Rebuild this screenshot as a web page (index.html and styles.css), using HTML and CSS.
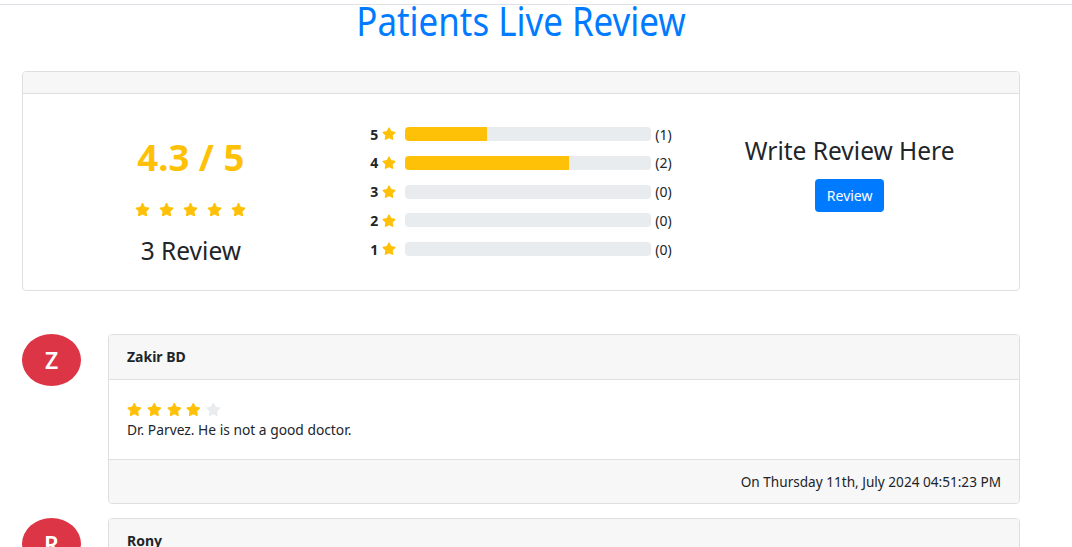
FILE: index.html
```html
<!DOCTYPE html>
<html lang="en">
<head>
<meta charset="utf-8">
<title>Patients Live Review</title>
<link rel="stylesheet" href="styles.css">
</head>
<body>
<div class="topbar"></div>
<main class="wrap">
  <h1 class="title">Patients Live Review</h1>

  <section class="card summary">
    <div class="card-header empty"></div>
    <div class="summary-body">
      <div class="col col-score">
        <div class="score">4.3 / 5</div>
        <div class="stars big">
          <svg class="star" viewBox="0 0 576 512"><path d="M259.3 17.8L194 150.2 47.9 171.5c-26.2 3.8-36.7 36.1-17.7 54.6l105.7 103-25 145.5c-4.5 26.3 23.2 46 46.4 33.7L288 439.6l130.7 68.7c23.2 12.2 50.9-7.4 46.4-33.7l-25-145.5 105.7-103c19-18.5 8.5-50.8-17.7-54.6L382 150.2 316.7 17.8c-11.7-23.6-45.6-23.9-57.4 0z"/></svg>
          <svg class="star" viewBox="0 0 576 512"><path d="M259.3 17.8L194 150.2 47.9 171.5c-26.2 3.8-36.7 36.1-17.7 54.6l105.7 103-25 145.5c-4.5 26.3 23.2 46 46.4 33.7L288 439.6l130.7 68.7c23.2 12.2 50.9-7.4 46.4-33.7l-25-145.5 105.7-103c19-18.5 8.5-50.8-17.7-54.6L382 150.2 316.7 17.8c-11.7-23.6-45.6-23.9-57.4 0z"/></svg>
          <svg class="star" viewBox="0 0 576 512"><path d="M259.3 17.8L194 150.2 47.9 171.5c-26.2 3.8-36.7 36.1-17.7 54.6l105.7 103-25 145.5c-4.5 26.3 23.2 46 46.4 33.7L288 439.6l130.7 68.7c23.2 12.2 50.9-7.4 46.4-33.7l-25-145.5 105.7-103c19-18.5 8.5-50.8-17.7-54.6L382 150.2 316.7 17.8c-11.7-23.6-45.6-23.9-57.4 0z"/></svg>
          <svg class="star" viewBox="0 0 576 512"><path d="M259.3 17.8L194 150.2 47.9 171.5c-26.2 3.8-36.7 36.1-17.7 54.6l105.7 103-25 145.5c-4.5 26.3 23.2 46 46.4 33.7L288 439.6l130.7 68.7c23.2 12.2 50.9-7.4 46.4-33.7l-25-145.5 105.7-103c19-18.5 8.5-50.8-17.7-54.6L382 150.2 316.7 17.8c-11.7-23.6-45.6-23.9-57.4 0z"/></svg>
          <svg class="star" viewBox="0 0 576 512"><path d="M259.3 17.8L194 150.2 47.9 171.5c-26.2 3.8-36.7 36.1-17.7 54.6l105.7 103-25 145.5c-4.5 26.3 23.2 46 46.4 33.7L288 439.6l130.7 68.7c23.2 12.2 50.9-7.4 46.4-33.7l-25-145.5 105.7-103c19-18.5 8.5-50.8-17.7-54.6L382 150.2 316.7 17.8c-11.7-23.6-45.6-23.9-57.4 0z"/></svg>
        </div>
        <div class="count">3 Review</div>
      </div>

      <div class="col col-bars">
        <div class="bar-row">
          <span class="lvl">5</span>
          <svg class="star bar-star" viewBox="0 0 576 512"><path d="M259.3 17.8L194 150.2 47.9 171.5c-26.2 3.8-36.7 36.1-17.7 54.6l105.7 103-25 145.5c-4.5 26.3 23.2 46 46.4 33.7L288 439.6l130.7 68.7c23.2 12.2 50.9-7.4 46.4-33.7l-25-145.5 105.7-103c19-18.5 8.5-50.8-17.7-54.6L382 150.2 316.7 17.8c-11.7-23.6-45.6-23.9-57.4 0z"/></svg>
          <div class="bar"><div class="fill" style="width:33.33%"></div></div>
          <span class="num">(1)</span>
        </div>
        <div class="bar-row">
          <span class="lvl">4</span>
          <svg class="star bar-star" viewBox="0 0 576 512"><path d="M259.3 17.8L194 150.2 47.9 171.5c-26.2 3.8-36.7 36.1-17.7 54.6l105.7 103-25 145.5c-4.5 26.3 23.2 46 46.4 33.7L288 439.6l130.7 68.7c23.2 12.2 50.9-7.4 46.4-33.7l-25-145.5 105.7-103c19-18.5 8.5-50.8-17.7-54.6L382 150.2 316.7 17.8c-11.7-23.6-45.6-23.9-57.4 0z"/></svg>
          <div class="bar"><div class="fill" style="width:66.67%"></div></div>
          <span class="num">(2)</span>
        </div>
        <div class="bar-row">
          <span class="lvl">3</span>
          <svg class="star bar-star" viewBox="0 0 576 512"><path d="M259.3 17.8L194 150.2 47.9 171.5c-26.2 3.8-36.7 36.1-17.7 54.6l105.7 103-25 145.5c-4.5 26.3 23.2 46 46.4 33.7L288 439.6l130.7 68.7c23.2 12.2 50.9-7.4 46.4-33.7l-25-145.5 105.7-103c19-18.5 8.5-50.8-17.7-54.6L382 150.2 316.7 17.8c-11.7-23.6-45.6-23.9-57.4 0z"/></svg>
          <div class="bar"><div class="fill" style="width:0%"></div></div>
          <span class="num">(0)</span>
        </div>
        <div class="bar-row">
          <span class="lvl">2</span>
          <svg class="star bar-star" viewBox="0 0 576 512"><path d="M259.3 17.8L194 150.2 47.9 171.5c-26.2 3.8-36.7 36.1-17.7 54.6l105.7 103-25 145.5c-4.5 26.3 23.2 46 46.4 33.7L288 439.6l130.7 68.7c23.2 12.2 50.9-7.4 46.4-33.7l-25-145.5 105.7-103c19-18.5 8.5-50.8-17.7-54.6L382 150.2 316.7 17.8c-11.7-23.6-45.6-23.9-57.4 0z"/></svg>
          <div class="bar"><div class="fill" style="width:0%"></div></div>
          <span class="num">(0)</span>
        </div>
        <div class="bar-row">
          <span class="lvl">1</span>
          <svg class="star bar-star" viewBox="0 0 576 512"><path d="M259.3 17.8L194 150.2 47.9 171.5c-26.2 3.8-36.7 36.1-17.7 54.6l105.7 103-25 145.5c-4.5 26.3 23.2 46 46.4 33.7L288 439.6l130.7 68.7c23.2 12.2 50.9-7.4 46.4-33.7l-25-145.5 105.7-103c19-18.5 8.5-50.8-17.7-54.6L382 150.2 316.7 17.8c-11.7-23.6-45.6-23.9-57.4 0z"/></svg>
          <div class="bar"><div class="fill" style="width:0%"></div></div>
          <span class="num">(0)</span>
        </div>
      </div>

      <div class="col col-write">
        <div class="write-title">Write Review Here</div>
        <button class="btn" type="button">Review</button>
      </div>
    </div>
  </section>

  <section class="reviews">
    <article class="review">
      <div class="avatar">Z</div>
      <div class="card review-card">
        <div class="card-header name">Zakir BD</div>
        <div class="review-body">
          <div class="stars small">
            <svg class="star" viewBox="0 0 576 512"><path d="M259.3 17.8L194 150.2 47.9 171.5c-26.2 3.8-36.7 36.1-17.7 54.6l105.7 103-25 145.5c-4.5 26.3 23.2 46 46.4 33.7L288 439.6l130.7 68.7c23.2 12.2 50.9-7.4 46.4-33.7l-25-145.5 105.7-103c19-18.5 8.5-50.8-17.7-54.6L382 150.2 316.7 17.8c-11.7-23.6-45.6-23.9-57.4 0z"/></svg>
            <svg class="star" viewBox="0 0 576 512"><path d="M259.3 17.8L194 150.2 47.9 171.5c-26.2 3.8-36.7 36.1-17.7 54.6l105.7 103-25 145.5c-4.5 26.3 23.2 46 46.4 33.7L288 439.6l130.7 68.7c23.2 12.2 50.9-7.4 46.4-33.7l-25-145.5 105.7-103c19-18.5 8.5-50.8-17.7-54.6L382 150.2 316.7 17.8c-11.7-23.6-45.6-23.9-57.4 0z"/></svg>
            <svg class="star" viewBox="0 0 576 512"><path d="M259.3 17.8L194 150.2 47.9 171.5c-26.2 3.8-36.7 36.1-17.7 54.6l105.7 103-25 145.5c-4.5 26.3 23.2 46 46.4 33.7L288 439.6l130.7 68.7c23.2 12.2 50.9-7.4 46.4-33.7l-25-145.5 105.7-103c19-18.5 8.5-50.8-17.7-54.6L382 150.2 316.7 17.8c-11.7-23.6-45.6-23.9-57.4 0z"/></svg>
            <svg class="star" viewBox="0 0 576 512"><path d="M259.3 17.8L194 150.2 47.9 171.5c-26.2 3.8-36.7 36.1-17.7 54.6l105.7 103-25 145.5c-4.5 26.3 23.2 46 46.4 33.7L288 439.6l130.7 68.7c23.2 12.2 50.9-7.4 46.4-33.7l-25-145.5 105.7-103c19-18.5 8.5-50.8-17.7-54.6L382 150.2 316.7 17.8c-11.7-23.6-45.6-23.9-57.4 0z"/></svg>
            <svg class="star off" viewBox="0 0 576 512"><path d="M259.3 17.8L194 150.2 47.9 171.5c-26.2 3.8-36.7 36.1-17.7 54.6l105.7 103-25 145.5c-4.5 26.3 23.2 46 46.4 33.7L288 439.6l130.7 68.7c23.2 12.2 50.9-7.4 46.4-33.7l-25-145.5 105.7-103c19-18.5 8.5-50.8-17.7-54.6L382 150.2 316.7 17.8c-11.7-23.6-45.6-23.9-57.4 0z"/></svg>
          </div>
          <p class="text">Dr. Parvez. He is not a good doctor.</p>
        </div>
        <div class="card-footer">On Thursday 11th, July 2024 04:51:23 PM</div>
      </div>
    </article>

    <article class="review">
      <div class="avatar">R</div>
      <div class="card review-card">
        <div class="card-header name">Rony</div>
        <div class="review-body">
          <div class="stars small">
            <svg class="star" viewBox="0 0 576 512"><path d="M259.3 17.8L194 150.2 47.9 171.5c-26.2 3.8-36.7 36.1-17.7 54.6l105.7 103-25 145.5c-4.5 26.3 23.2 46 46.4 33.7L288 439.6l130.7 68.7c23.2 12.2 50.9-7.4 46.4-33.7l-25-145.5 105.7-103c19-18.5 8.5-50.8-17.7-54.6L382 150.2 316.7 17.8c-11.7-23.6-45.6-23.9-57.4 0z"/></svg>
            <svg class="star" viewBox="0 0 576 512"><path d="M259.3 17.8L194 150.2 47.9 171.5c-26.2 3.8-36.7 36.1-17.7 54.6l105.7 103-25 145.5c-4.5 26.3 23.2 46 46.4 33.7L288 439.6l130.7 68.7c23.2 12.2 50.9-7.4 46.4-33.7l-25-145.5 105.7-103c19-18.5 8.5-50.8-17.7-54.6L382 150.2 316.7 17.8c-11.7-23.6-45.6-23.9-57.4 0z"/></svg>
            <svg class="star" viewBox="0 0 576 512"><path d="M259.3 17.8L194 150.2 47.9 171.5c-26.2 3.8-36.7 36.1-17.7 54.6l105.7 103-25 145.5c-4.5 26.3 23.2 46 46.4 33.7L288 439.6l130.7 68.7c23.2 12.2 50.9-7.4 46.4-33.7l-25-145.5 105.7-103c19-18.5 8.5-50.8-17.7-54.6L382 150.2 316.7 17.8c-11.7-23.6-45.6-23.9-57.4 0z"/></svg>
            <svg class="star" viewBox="0 0 576 512"><path d="M259.3 17.8L194 150.2 47.9 171.5c-26.2 3.8-36.7 36.1-17.7 54.6l105.7 103-25 145.5c-4.5 26.3 23.2 46 46.4 33.7L288 439.6l130.7 68.7c23.2 12.2 50.9-7.4 46.4-33.7l-25-145.5 105.7-103c19-18.5 8.5-50.8-17.7-54.6L382 150.2 316.7 17.8c-11.7-23.6-45.6-23.9-57.4 0z"/></svg>
            <svg class="star" viewBox="0 0 576 512"><path d="M259.3 17.8L194 150.2 47.9 171.5c-26.2 3.8-36.7 36.1-17.7 54.6l105.7 103-25 145.5c-4.5 26.3 23.2 46 46.4 33.7L288 439.6l130.7 68.7c23.2 12.2 50.9-7.4 46.4-33.7l-25-145.5 105.7-103c19-18.5 8.5-50.8-17.7-54.6L382 150.2 316.7 17.8c-11.7-23.6-45.6-23.9-57.4 0z"/></svg>
          </div>
          <p class="text">Good doctor.</p>
        </div>
        <div class="card-footer">On Thursday 11th, July 2024 04:40:10 PM</div>
      </div>
    </article>
  </section>
</main>
</body>
</html>
```

FILE: styles.css
```css
html {
  overflow: hidden;
}

body {
  margin: 0;
  font-family: "Noto Sans", "Open Sans", sans-serif;
  color: #212529;
  background: #fff;
}

.topbar {
  height: 4px;
  border-bottom: 1px solid #dee2e6;
}

.wrap {
  width: 998px;
  margin-left: 22px;
}

.title {
  margin: -8.5px 0 26.5px;
  font-size: 40px;
  line-height: 48px;
  font-weight: 400;
  color: #007bff;
  text-align: center;
  transform: scaleX(0.872);
}

.card {
  border: 1px solid #dfdfdf;
  border-radius: 4px;
  background: #fff;
  overflow: hidden;
}

.card-header {
  background: #f7f7f7;
  border-bottom: 1px solid #dfdfdf;
}

.card-header.empty {
  height: 21px;
}

.summary-body {
  height: 196px;
  padding: 0 5px;
  display: grid;
  grid-template-columns: repeat(3, 1fr);
}

.col {
  display: flex;
  flex-direction: column;
  align-items: center;
}

.col-score {
  padding-top: 38.5px;
  padding-right: 3px;
}

.score {
  font-size: 36.5px;
  line-height: 48px;
  font-weight: 700;
  color: #ffc107;
}

.stars {
  display: flex;
  color: #ffc107;
}

.stars.big {
  margin-top: 22.5px;
  gap: 9px;
}

.stars.big .star {
  width: 15px;
  height: 13.3px;
}

.star {
  display: block;
  fill: currentColor;
}

.count {
  margin-top: 20px;
  font-size: 24.5px;
  line-height: 29px;
}

.col-bars {
  padding-top: 33px;
  gap: 14.75px;
}

.bar-row {
  height: 14px;
  display: flex;
  align-items: center;
  font-size: 14px;
  line-height: 21px;
}

.lvl {
  font-weight: 700;
  width: 8px;
}

.bar-star {
  width: 14px;
  height: 13.4px;
  margin-left: 4px;
  color: #ffc107;
}

.bar {
  width: 246px;
  height: 14px;
  margin-left: 9px;
  background: #e9ecef;
  border-radius: 4px;
  overflow: hidden;
}

.fill {
  height: 100%;
  background: #ffc107;
}

.num {
  margin-left: 4px;
}

.col-write {
  padding-top: 41.5px;
}

.write-title {
  font-size: 24.5px;
  line-height: 29px;
}

.btn {
  margin-top: 14px;
  padding: 6px 12px;
  font-family: inherit;
  font-size: 14px;
  line-height: 21px;
  color: #fff;
  background: #007bff;
  border: 0;
  border-radius: 4px;
}

.reviews {
  margin-top: 43px;
}

.review {
  display: flex;
  align-items: flex-start;
  margin-bottom: 14px;
}

.avatar {
  flex: none;
  width: 59px;
  height: 52px;
  margin-right: 27px;
  border-radius: 50%;
  background: #dc3545;
  color: #fff;
  font-size: 23px;
  font-weight: 600;
  line-height: 52px;
  text-align: center;
}

.review-card {
  flex: 1;
}

.name {
  padding: 10.5px 18px 12.5px;
  font-size: 14px;
  line-height: 21px;
  font-weight: 700;
}

.review-body {
  padding: 20px 18px 19.5px;
}

.stars.small {
  height: 18.5px;
  align-items: center;
  gap: 5.2px;
}

.stars.small .star {
  width: 14.6px;
  height: 13px;
}

.stars.small .star.off {
  color: #e9ecef;
}

.text {
  margin: 0;
  font-size: 13.8px;
  line-height: 21px;
}

.card-footer {
  padding: 11px 18px;
  background: #f7f7f7;
  border-top: 1px solid #dfdfdf;
  font-size: 13.6px;
  line-height: 21px;
  text-align: right;
}
```
